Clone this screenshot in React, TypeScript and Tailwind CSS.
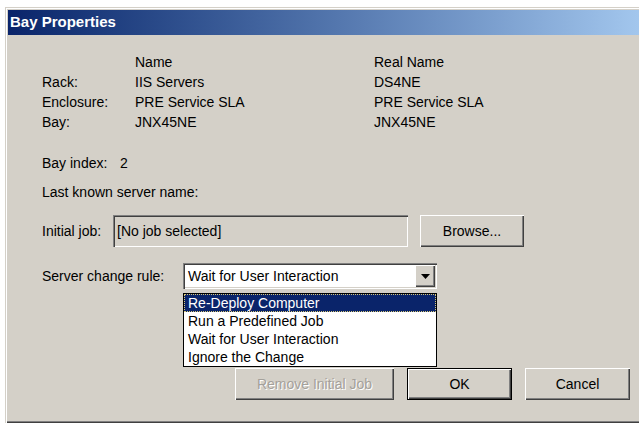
import React from 'react';

// classic 3D edges
const RAISED = 'shadow-[inset_1px_1px_0_#fff,inset_-1px_-1px_0_#404040,inset_-2px_-2px_0_#808080]';
const SUNKEN = 'shadow-[inset_1px_1px_0_#808080,inset_2px_2px_0_#404040,inset_-1px_-1px_0_#fff,inset_-2px_-2px_0_#d4d0c8]';

const ROWS = [
  { label: 'Rack:', name: 'IIS Servers', real: 'DS4NE' },
  { label: 'Enclosure:', name: 'PRE Service SLA', real: 'PRE Service SLA' },
  { label: 'Bay:', name: 'JNX45NE', real: 'JNX45NE' },
];

const RULES = ['Re-Deploy Computer', 'Run a Predefined Job', 'Wait for User Interaction', 'Ignore the Change'];

function Button({ children, className = '', disabled = false, isDefault = false }: {
  children: React.ReactNode;
  className?: string;
  disabled?: boolean;
  isDefault?: boolean;
}) {
  return (
    <div className={`h-full ${isDefault ? 'border border-black' : ''} ${className}`}>
      <button
        disabled={disabled}
        className={`w-full h-full bg-[#d4d0c8] flex items-center justify-center ${RAISED} ${
          disabled ? 'text-[#a4a09a] [text-shadow:1px_1px_0_#fff]' : 'text-black'
        }`}
      >
        {children}
      </button>
    </div>
  );
}

export default function App() {
  return (
    <div className="w-[639px] h-[442px] overflow-hidden bg-white pt-[7px] pl-[5px] font-['Liberation_Sans',Arial,sans-serif] text-[14px] text-black">
      <div className="w-[650px] h-[416px] bg-[#d4d0c8] p-[3px] flex flex-col shadow-[inset_1px_1px_0_#d4d0c8,inset_2px_2px_0_#fff,inset_-1px_-1px_0_#404040,inset_-2px_-2px_0_#808080]">
        {/* title bar */}
        <div className="h-[25px] shrink-0 bg-gradient-to-r from-[#0a246a] to-[#a6caf0] flex items-center pl-[2px] text-white font-bold text-[15px]">
          Bay Properties
        </div>

        <div className="relative pl-[34px] pt-[17px]">
          <div className="grid grid-cols-[93px_239px_1fr] leading-[20px]">
            <span />
            <span>Name</span>
            <span>Real Name</span>
            {ROWS.map((r) => (
              <React.Fragment key={r.label}>
                <span>{r.label}</span>
                <span>{r.name}</span>
                <span>{r.real}</span>
              </React.Fragment>
            ))}
          </div>

          <div className="mt-[21px] flex leading-[20px]">
            <span className="w-[78px]">Bay index:</span>
            <span>2</span>
          </div>

          <div className="mt-[9px] leading-[20px]">Last known server name:</div>

          <div className="mt-[13px] h-[32px] flex items-center">
            <span className="w-[71px]">Initial job:</span>
            <div className={`w-[295px] h-full bg-[#d4d0c8] pl-[4px] flex items-center ${SUNKEN}`}>[No job selected]</div>
            <Button className="ml-[12px] w-[104px]">Browse...</Button>
          </div>

          <div className="mt-[16px] h-[26px] flex items-center">
            <span className="w-[141px]">Server change rule:</span>
            <div className={`relative w-[254px] h-full bg-white flex items-center pl-[5px] ${SUNKEN}`}>
              <span className="flex-1">Wait for User Interaction</span>
              <div className={`w-[20px] h-[22px] mr-[2px] bg-[#d4d0c8] flex items-center justify-center ${RAISED}`}>
                <svg width="9" height="5" viewBox="0 0 9 5">
                  <path d="M0 0h9L4.5 5z" fill="#000" />
                </svg>
              </div>

              {/* open dropdown list */}
              <div className="absolute left-0 top-[30px] w-full z-10 bg-white border border-black leading-[18px]">
                {RULES.map((rule, i) => (
                  <div
                    key={rule}
                    className={`pl-[4px] ${i === 0 ? 'bg-[#0a246a] text-white outline outline-1 outline-dotted outline-[#d8c878] -outline-offset-1' : ''}`}
                  >
                    {rule}
                  </div>
                ))}
              </div>
            </div>
          </div>

          <div className="mt-[79px] h-[32px] flex">
            <Button disabled className="ml-[193px] w-[159px]">Remove Initial Job</Button>
            <Button isDefault className="ml-[13px] w-[105px]">OK</Button>
            <Button className="ml-[13px] w-[105px]">Cancel</Button>
          </div>
        </div>
      </div>
    </div>
  );
}
